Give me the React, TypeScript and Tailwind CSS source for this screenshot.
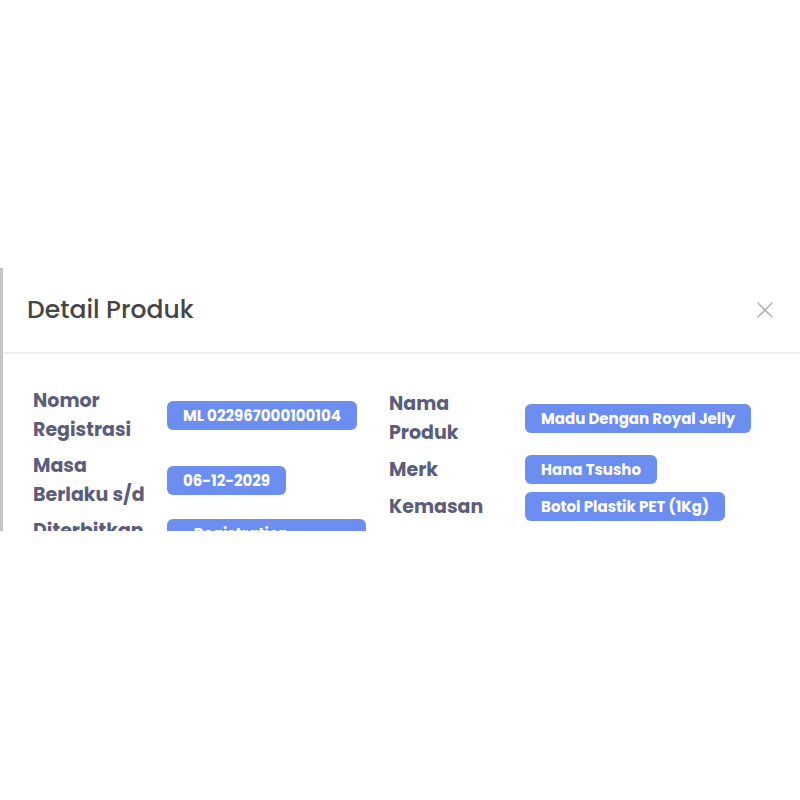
import React from 'react';

type RowData = { label: string[]; value: React.ReactNode; wide?: boolean };

const leftRows: RowData[] = [
  { label: ['Nomor', 'Registrasi'], value: 'ML 022967000100104' },
  { label: ['Masa', 'Berlaku s/d'], value: '06-12-2029' },
  {
    label: ['Diterbitkan', 'Oleh'],
    value: (
      <ul className="list-none">
        <li>• Registration</li>
        <li>&nbsp;&nbsp;Office</li>
      </ul>
    ),
    wide: true,
  },
];

const rightRows: RowData[] = [
  { label: ['Nama', 'Produk'], value: 'Madu Dengan Royal Jelly' },
  { label: ['Merk'], value: 'Hana Tsusho' },
  { label: ['Kemasan'], value: 'Botol Plastik PET (1Kg)' },
];

function Row({ label, value, wide, labelWidth }: RowData & { labelWidth: string }) {
  return (
    <div className="flex items-center">
      <div className={`${labelWidth} shrink-0 text-[19px] font-bold leading-[29px] text-[#5a5d7c]`}>
        {label.map((l) => (
          <div key={l}>{l}</div>
        ))}
      </div>
      <span
        className={`inline-block rounded-md bg-[#6b8ef0] px-[16px] py-[5px] text-[15px] font-bold leading-[19px] text-white whitespace-nowrap ${wide ? 'w-[199px] -translate-y-[2px]' : ''}`}
      >
        {value}
      </span>
    </div>
  );
}

export default function App() {
  return (
    <div className="h-[800px] w-[800px] bg-white" style={{ fontFamily: 'Poppins, "Open Sans", sans-serif' }}>
      {/* space above the modal */}
      <div className="h-[268px]" />

      {/* --- Modal (clipped at the bottom) --- */}
      <div className="h-[263px] overflow-hidden border-l-[3px] border-[#c4c4c4] bg-white">
        {/* Header */}
        <div className="flex h-[86px] items-center justify-between border-b-2 border-[#eceef1] pl-[24px] pr-[26px]">
          <h2 className="text-[25px] font-medium text-[#454545]">Detail Produk</h2>
          <svg width="18" height="18" viewBox="0 0 18 18" className="text-[#b3b3b3]">
            <path d="M2 2 L16 16 M16 2 L2 16" stroke="currentColor" strokeWidth="1.6" strokeLinecap="round" />
          </svg>
        </div>

        {/* Body */}
        <div className="grid grid-cols-[356px_1fr] pl-[30px] pt-[32px]">
          <div className="flex flex-col gap-[7px]">
            {leftRows.map((r, i) => (
              <Row key={i} {...r} labelWidth="w-[134px]" />
            ))}
          </div>
          <div className="flex flex-col gap-[8px] pt-[3px]">
            {rightRows.map((r, i) => (
              <Row key={i} {...r} labelWidth="w-[136px]" />
            ))}
          </div>
        </div>
      </div>
    </div>
  );
}
